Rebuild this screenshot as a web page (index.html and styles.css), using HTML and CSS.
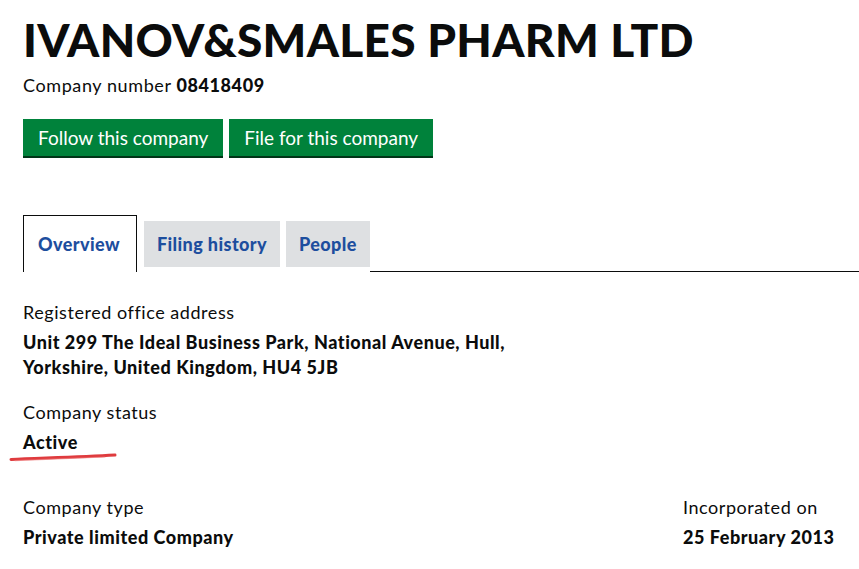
FILE: index.html
```html
<!DOCTYPE html>
<html lang="en">
<head>
<meta charset="utf-8">
<title>IVANOV&amp;SMALES PHARM LTD</title>
<link rel="stylesheet" href="styles.css">
</head>
<body>
<main class="page">
  <h1 class="title">IVANOV&amp;SMALES PHARM LTD</h1>
  <p class="company-number">Company number <strong>08418409</strong></p>
  <div class="actions">
    <a class="button" href="#">Follow this company</a>
    <a class="button" href="#">File for this company</a>
  </div>
  <nav class="tabs">
    <a class="tab tab-active" href="#">Overview</a>
    <a class="tab" href="#">Filing history</a>
    <a class="tab" href="#">People</a>
    <span class="tab-rule"></span>
  </nav>
  <section class="details">
    <dl class="field">
      <dt>Registered office address</dt>
      <dd>Unit 299 The Ideal Business Park, National Avenue, Hull,<br>Yorkshire, United Kingdom, HU4 5JB</dd>
    </dl>
    <dl class="field status">
      <dt>Company status</dt>
      <dd>Active</dd>
      <svg class="scribble" width="112" height="12" viewBox="0 0 112 12">
        <path d="M2 8.5 C30 7.2 70 6 106 4" stroke="#dc2a2e" stroke-width="3" fill="none" stroke-linecap="round" opacity="0.92"/>
        <path d="M6 9.6 C35 8.4 70 7.2 96 6" stroke="#ef7b7b" stroke-width="1.2" fill="none" stroke-linecap="round" opacity="0.6"/>
      </svg>
    </dl>
    <div class="row">
      <dl class="field">
        <dt>Company type</dt>
        <dd>Private limited Company</dd>
      </dl>
      <dl class="field">
        <dt>Incorporated on</dt>
        <dd>25 February 2013</dd>
      </dl>
    </div>
  </section>
</main>
</body>
</html>
```

FILE: styles.css
```css
* { box-sizing: border-box; }
html, body { margin: 0; padding: 0; background: #fff; }
body {
  font-family: "Lato", "Open Sans", sans-serif;
  color: #0b0c0c;
}
.page {
  padding: 12px 0 0 23px;
  width: 859px;
}
.title {
  margin: 0;
  font-size: 46px;
  font-weight: 900;
  line-height: 56px;
  letter-spacing: 0.3px;
}
.company-number {
  margin: 5px 0 0;
  font-size: 18px;
  line-height: 24px;
  letter-spacing: 0.6px;
}
.company-number strong { font-weight: 900; }
.actions {
  display: flex;
  gap: 6px;
  margin-top: 22px;
}
.button {
  display: block;
  height: 39px;
  padding: 0 15px;
  background: #00823b;
  border-bottom: 2px solid #003618;
  color: #fff;
  text-decoration: none;
  font-size: 19px;
  line-height: 38px;
}
.tabs {
  display: flex;
  align-items: flex-end;
  gap: 6px;
  margin-top: 57px;
  height: 57px;
}
.tab {
  display: block;
  background: #dee0e2;
  color: #1d4e9e;
  font-weight: 900;
  font-size: 18px;
  letter-spacing: 0.4px;
  text-decoration: none;
  height: 46px;
  line-height: 46px;
  padding: 0 13px;
  margin-bottom: 5px;
}
.tab-active {
  background: #fff;
  border: 1px solid #0b0c0c;
  border-bottom: none;
  height: 57px;
  line-height: 57px;
  padding: 0 16px 0 14px;
  margin-bottom: 0;
  margin-right: 1px;
}
.tab-rule {
  flex: 1;
  align-self: flex-end;
  border-bottom: 1px solid #0b0c0c;
  margin-left: -6px;
}
.details { padding-top: 28px; }
.field { margin: 0; }
.field dt {
  font-size: 18px;
  letter-spacing: 0.55px;
  line-height: 24px;
}
.field dd {
  margin: 6px 0 0;
  font-weight: 900;
  font-size: 18px;
  letter-spacing: 0.55px;
  line-height: 25px;
}
.details > .field + .field { margin-top: 20px; }
.status { position: relative; width: 200px; }
.scribble {
  position: absolute;
  left: -14px;
  top: 51px;
}
.row {
  display: grid;
  grid-template-columns: 660px auto;
  margin-top: 40px;
}
```
